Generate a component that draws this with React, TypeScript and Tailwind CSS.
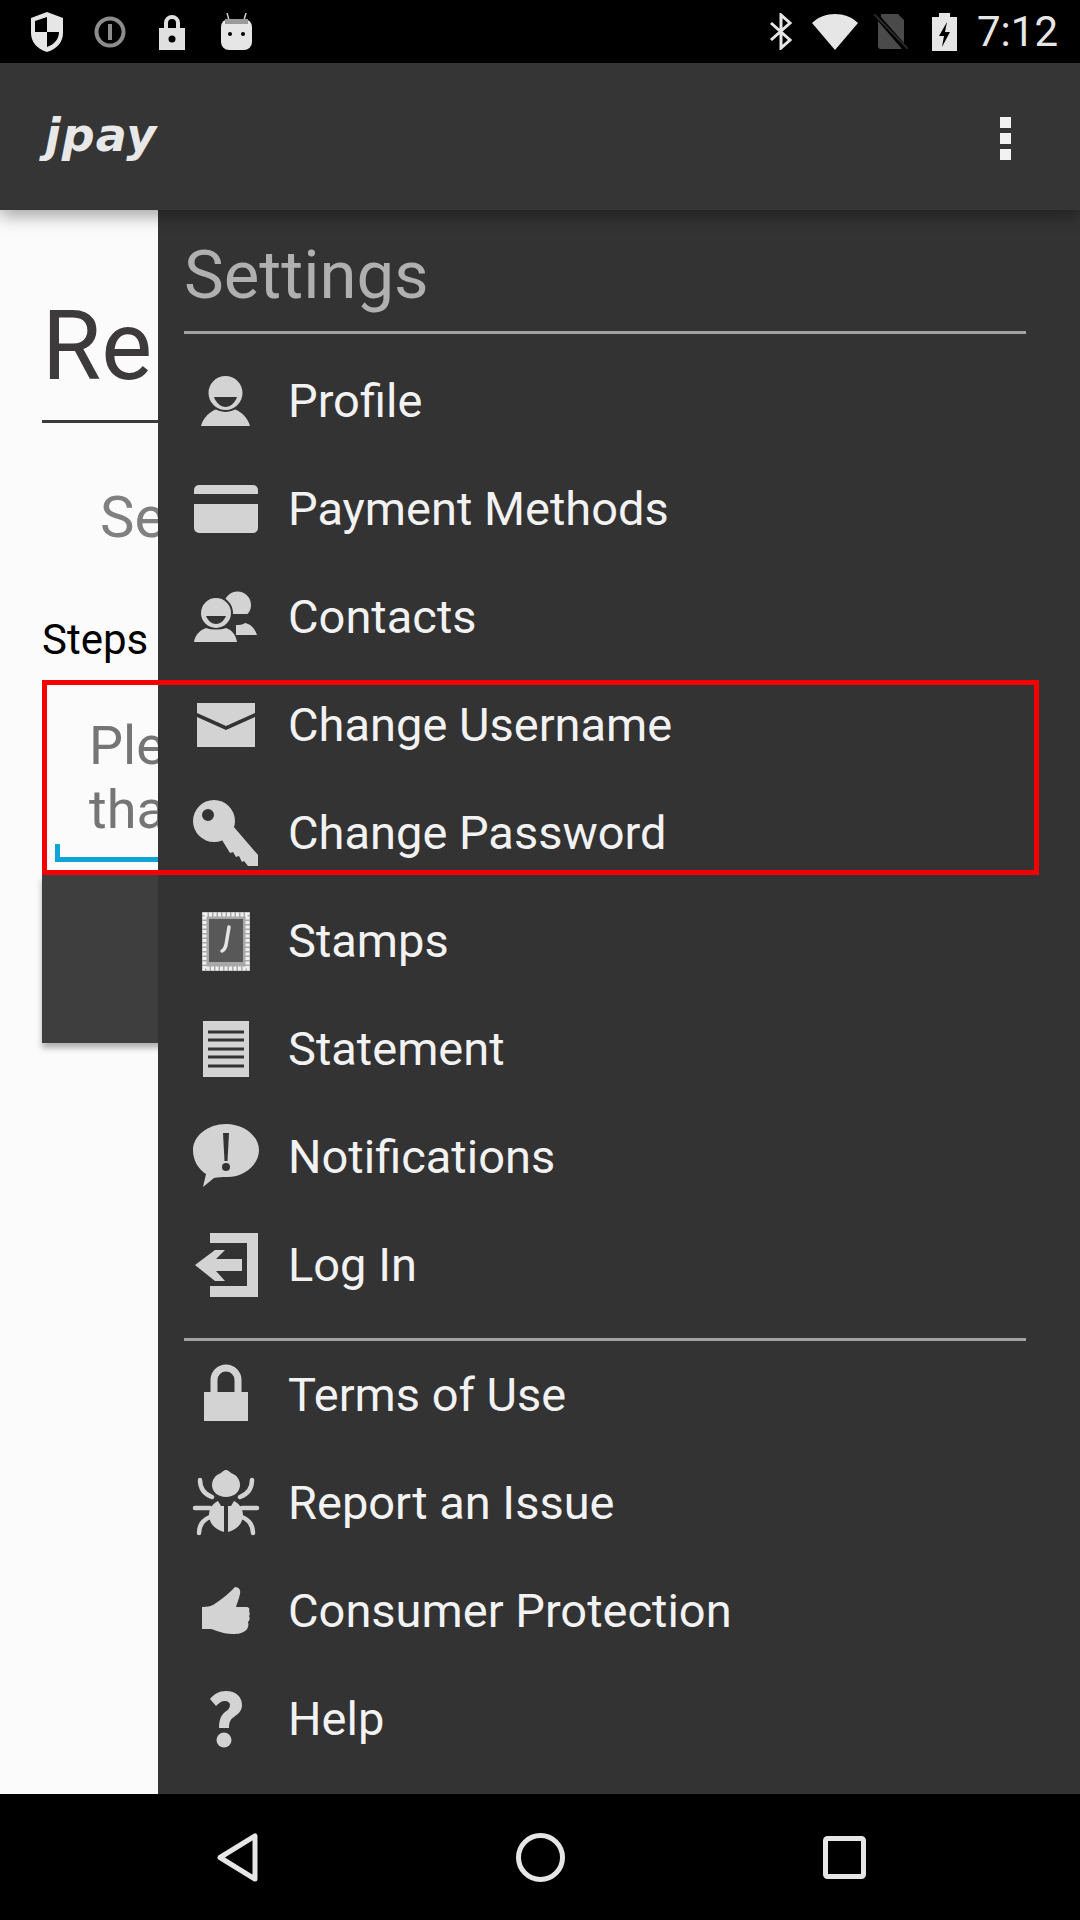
const rows1 = [
  ['profile', 'Profile'],
  ['card', 'Payment Methods'],
  ['contacts', 'Contacts'],
  ['mail', 'Change Username'],
  ['key', 'Change Password'],
  ['stamp', 'Stamps'],
  ['statement', 'Statement'],
  ['alert', 'Notifications'],
  ['login', 'Log In'],
]

const rows2 = [
  ['lock', 'Terms of Use'],
  ['bug', 'Report an Issue'],
  ['thumb', 'Consumer Protection'],
  ['help', 'Help'],
]

function MenuIcon({ name }: { name: string }) {
  const c = '#d3d3d3'
  const bg = '#333333'
  return (
    <svg width="70" height="72" viewBox="0 0 70 72" className="shrink-0">
      {name === 'profile' && (
        <g fill={c}>
          <path d="M11 62c2-8 9-15 16-17 5 2 11 2 17 0 7 2 14 9 16 17z" />
          <circle cx="35.500" cy="29" r="19" fill={bg} />
          <circle cx="35.500" cy="29" r="17" />
          <path d="M24 33h23c-2 6-7 10-11.500 10S26 39 24 33z" fill={bg} />
        </g>
      )}
      {name === 'card' && (
        <g fill={c}>
          <path d="M4 18a5 5 0 0 1 5-5h54a5 5 0 0 1 5 5v4H4z" />
          <path d="M4 32h64v24a5 5 0 0 1-5 5H9a5 5 0 0 1-5-5z" />
        </g>
      )}
      {name === 'contacts' && (
        <g fill={c}>
          <circle cx="47.500" cy="25" r="13.500" />
          <path d="M38 34h20c-2 5-6 7-10 7s-8-2-10-7z" fill={bg} />
          <path d="M46 45c3 0 6 0 9-2 6 1 10 6 12 12H46z" />
          <circle cx="26" cy="33" r="17" fill={bg} />
          <circle cx="26" cy="33" r="15" />
          <path d="M16 36h20c-2 5-6 8-10 8s-8-3-10-8z" fill={bg} />
          <path d="M4 62c1-7 6-12 12-14 6 2 14 2 20 0 6 2 10 7 11 14z" />
        </g>
      )}
      {name === 'mail' && (
        <g fill={c}>
          <path d="M7 15h58v10L36 38 7 25z" />
          <path d="M7 29l29 13 29-13v30H7z" />
        </g>
      )}
      {name === 'key' && (
        <g fill={c}>
          <path fillRule="evenodd" d="M24 4a21 21 0 1 1 0 42 21 21 0 0 1 0-42zm-6 9a6 6 0 1 0 0 12 6 6 0 0 0 0-12z" />
          <path d="M43 30l25 29v11H58l-4-5-2 1-3-6-3 1-3-5-3 1-8-13z" />
        </g>
      )}
      {name === 'stamp' && (
        <g>
          <rect x="12" y="8" width="48" height="59" fill="#a8a8a8" />
          <rect x="14.500" y="10.500" width="43" height="54" fill="none" stroke="#f0f0f0" strokeWidth="4" strokeDasharray="3 1.500" />
          <rect x="19" y="15" width="34" height="43" fill="#585858" />
          <path d="M39 23l-3 18c-1 4-2 5-4 6" fill="none" stroke="#e4e4e4" strokeWidth="3.500" strokeLinecap="round" />
        </g>
      )}
      {name === 'statement' && (
        <g>
          <rect x="13" y="9" width="46" height="56" fill={c} />
          <path d="M18 20h36M18 28h36M18 37h36M18 45h36M18 54h36" stroke={bg} strokeWidth="3" />
        </g>
      )}
      {name === 'alert' && (
        <g>
          <path d="M36 4c18 0 33 12 33 26S55 57 37 57c-5 0-9 0-13 1L13 67l3-13C8 49 3 40 3 30 3 16 18 4 36 4z" fill={c} />
          <path d="M33 13h6l-1.500 28h-3z" fill={bg} />
          <circle cx="36" cy="47" r="4" fill={bg} />
        </g>
      )}
      {name === 'login' && (
        <g fill={c}>
          <path d="M20 5h48v64H20V58h37V15H20z" />
          <path d="M5 37l20-15 10 0-9 9h26v12H26l9 10H25z" />
        </g>
      )}
      {name === 'lock' && (
        <g>
          <path d="M24 36V22a12 12 0 0 1 24 0v14" fill="none" stroke={c} strokeWidth="7" />
          <rect x="14" y="34" width="44" height="29" fill={c} />
        </g>
      )}
      {name === 'bug' && (
        <g fill="none" stroke={c} strokeWidth="4.500" strokeLinecap="round">
          <path d="M10 14c0 8 4 14 12 17M62 14c0 8-4 14-12 17M5 42h15M52 42h15M9 67c0-8 4-13 11-16M63 67c0-8-4-13-11-16" />
          <path d="M36 4c2 0 4 2 5 3 6 2 9 7 9 12 0 7-6 12-14 12s-14-5-14-12c0-5 3-10 9-12 1-1 3-3 5-3z" fill={c} stroke="none" />
          <path d="M34 66V40h-3l-3-5c-5 2-9 8-9 14 0 9 7 15 15 17zM38 66V40h3l3-5c5 2 9 8 9 14 0 9-7 15-15 17z" fill={c} stroke="none" />
        </g>
      )}
      {name === 'thumb' && (
        <g fill={c}>
          <path d="M12 33c6 0 10-1 14-4 8-5 14-11 19-16 4 0 6 3 5 7-1 5-3 9-4 13h10c3 0 4 2 3 4 1 2 1 4 0 5 1 2 1 4-1 6 1 3 0 7-3 9-4 3-9 3-13 3-8 0-14-3-21-5H12z" />
        </g>
      )}
      {name === 'help' && (
        <g fill={c}>
          <path d="M20 17c4-5 9-8 16-8 10 0 16 6 16 14 0 6-4 9-8 12-3 2-5 4-5 11H29c0-8 2-13 6-16 3-2 5-4 5-7 0-2-2-4-5-4-4 0-6 2-9 5z" />
          <circle cx="34" cy="58" r="7.500" />
        </g>
      )}
    </svg>
  )
}

function StatusBar() {
  return (
    <div className="h-[63px] bg-black flex items-center justify-between pl-[30px] pr-[22px] shrink-0">
      <div className="flex items-center">
        <svg width="34" height="42" viewBox="0 0 34 42" className="mr-[30px]">
          <path d="M17 1l16 6v15c0 9-6 16-16 19C7 38 1 31 1 22V7z" fill="#e6e6e6" />
          <path d="M17 6L5 10v11h12zM17 21v15c6-2 12-7 12-15z" fill="#000" />
        </svg>
        <svg width="32" height="32" viewBox="0 0 32 32" className="mr-[33px]">
          <circle cx="16" cy="16" r="13.500" fill="none" stroke="#8c8c8c" strokeWidth="4" />
          <rect x="14" y="8" width="4" height="16" fill="#8c8c8c" />
        </svg>
        <svg width="26" height="36" viewBox="0 0 26 36" className="mr-[36px]">
          <path d="M7 16V9a6 6 0 0 1 12 0v7" fill="none" stroke="#e0e0e0" strokeWidth="4" />
          <rect x="0" y="14" width="26" height="22" fill="#e0e0e0" />
          <circle cx="13" cy="25" r="3.500" fill="#000" />
        </svg>
        <svg width="31" height="37" viewBox="0 0 31 37">
          <path d="M8 7L6 0M23 7l2-7" stroke="#cccccc" strokeWidth="1.500" />
          <rect x="0" y="6" width="31" height="31" rx="8" fill="#e6e6e6" />
          <path d="M4 6h23v5H4z" fill="#9a9a9a" />
          <circle cx="9" cy="21" r="2" fill="#000" />
          <circle cx="22" cy="21" r="2" fill="#000" />
        </svg>
      </div>
      <div className="flex items-center">
        <svg width="24" height="37" viewBox="0 0 24 37" className="mr-[19px]">
          <path d="M2 10l19 17-9 8V2l9 8L2 27" fill="none" stroke="#e6e6e6" strokeWidth="3" />
        </svg>
        <svg width="46" height="36" viewBox="0 0 46 36" className="mr-[16px]">
          <path d="M23 36L0 9c12-12 34-12 46 0z" fill="#e6e6e6" />
        </svg>
        <svg width="34" height="35" viewBox="0 0 34 35" className="mr-[24px]">
          <path d="M7 0h17l6 6v23L7 3zM4 7l24 28H7a3 3 0 0 1-3-3z" fill="#4a4a4a" />
          <path d="M0 0l34 35" stroke="#2a2a2a" strokeWidth="2" />
        </svg>
        <svg width="25" height="38" viewBox="0 0 25 38" className="mr-[20px]">
          <path d="M7 0h11v4h7v34H0V4h7z" fill="#e6e6e6" />
          <path d="M15 9L7 23h5l-2 11 8-15h-5z" fill="#000" />
        </svg>
        <span className="text-[42px] leading-none text-[#e6e6e6]">7:12</span>
      </div>
    </div>
  )
}

export default function App() {
  return (
    <div className="w-[1080px] h-[1920px] flex flex-col overflow-hidden bg-black font-['Roboto',sans-serif]">
      <StatusBar />

      <div className="h-[147px] bg-[#353535] flex items-center justify-between pl-[45px] pr-[69px] shrink-0 relative z-10 shadow-[0_6px_16px_rgba(0,0,0,0.35)]">
        <span className="text-[46px] leading-none font-bold italic text-[#e8e8e8] font-['DejaVu_Sans',sans-serif] tracking-[1px] mt-[-3px]">jpay</span>
        <div className="flex flex-col gap-[5px] mt-[3px]">
          <div className="w-[11px] h-[11px] bg-[#f2f2f2]" />
          <div className="w-[11px] h-[11px] bg-[#f2f2f2]" />
          <div className="w-[11px] h-[11px] bg-[#f2f2f2]" />
        </div>
      </div>

      <div className="relative flex-1 bg-[#fbfbfb] overflow-hidden">
        {/* page behind the drawer */}
        <div className="px-[42px] pt-[85px]">
          <div className="text-[96px] leading-[103px] text-[#3c3a3b] border-b-[3px] border-[#3c3a3b] h-[128px]">Re</div>
          <div className="text-[58px] leading-[68px] text-[#808080] pl-[58px] mt-[60px]">Se</div>
          <div className="text-[42px] leading-[50px] text-black mt-[64px]">Steps</div>
          <div className="mt-[32px] h-[178px] pl-[47px] pt-[17px] relative">
            <div className="text-[54px] leading-[64px] text-[#757575]">Ple<br />tha</div>
            <div className="absolute left-[13px] right-0 bottom-[13px] h-[5px] bg-[#0ea5d6]" />
            <div className="absolute left-[13px] bottom-[13px] w-[5px] h-[18px] bg-[#0ea5d6]" />
          </div>
          <div className="h-[168px] bg-[#3f3e3f] shadow-[0_5px_6px_rgba(0,0,0,0.3)]" />
        </div>

        {/* settings drawer */}
        <div className="absolute top-0 bottom-0 left-[158px] right-0 bg-[#333333] pl-[26px] pr-[54px]">
          <div className="h-[124px] border-b-[3px] border-[#a4a4a4] flex items-center pt-[10px]">
            <span className="text-[67px] leading-none text-[#b0b0b0]">Settings</span>
          </div>
          <div className="pt-[12px]">
            {rows1.map(([icon, label]) => (
              <div key={label} className="h-[108px] flex items-center gap-[28px] pl-[6px]">
                <MenuIcon name={icon} />
                <span className="text-[47px] leading-none text-[#f2f2f2]">{label}</span>
              </div>
            ))}
          </div>
          <div className="h-[3px] bg-[#a4a4a4] mt-[20px]" />
          <div className="mt-[-1px]">
            {rows2.map(([icon, label]) => (
              <div key={label} className="h-[108px] flex items-center gap-[28px] pl-[6px]">
                <MenuIcon name={icon} />
                <span className="text-[47px] leading-none text-[#f2f2f2]">{label}</span>
              </div>
            ))}
          </div>
        </div>

        {/* annotation box on top of everything */}
        <div className="absolute left-[42px] top-[470px] w-[997px] h-[195px] border-[5px] border-[#f40000]" />
      </div>

      <div className="h-[126px] bg-black flex items-center justify-between pl-[217px] pr-[214px] shrink-0">
        <svg width="41" height="49" viewBox="0 0 41 49">
          <path d="M38 3v43L3 24.500z" fill="none" stroke="#e6e6e6" strokeWidth="5" strokeLinejoin="round" />
        </svg>
        <svg width="49" height="49" viewBox="0 0 49 49">
          <circle cx="24.500" cy="24.500" r="22" fill="none" stroke="#e6e6e6" strokeWidth="5" />
        </svg>
        <svg width="43" height="43" viewBox="0 0 43 43">
          <rect x="2.500" y="2.500" width="38" height="38" rx="2" fill="none" stroke="#e6e6e6" strokeWidth="5" />
        </svg>
      </div>
    </div>
  )
}
